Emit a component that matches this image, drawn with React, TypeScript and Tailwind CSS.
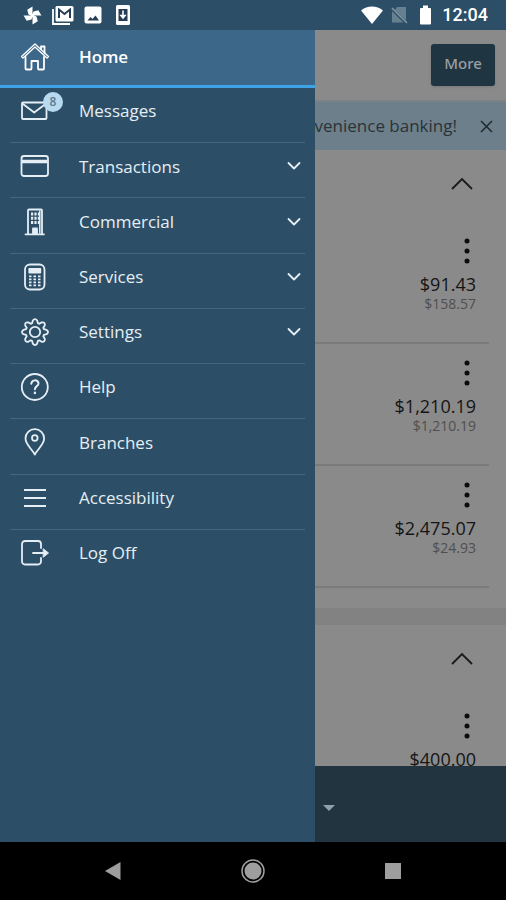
import type { ReactNode } from 'react';

const stroke = {
  fill: 'none',
  stroke: 'currentColor',
  strokeWidth: 1.8,
  strokeLinecap: 'round' as const,
  strokeLinejoin: 'round' as const,
};

function Icon({ children }: { children: ReactNode }) {
  return (
    <svg width="30" height="30" viewBox="0 0 30 30" aria-hidden="true" {...stroke}>
      {children}
    </svg>
  );
}

function HomeIcon() {
  return (
    <Icon>
      <path d="M5.500 15v11.500q0 1 1 1h4q1 0 1-1v-7.500h6.500v7.500q0 1 1 1h4q1 0 1-1V15" />
      <path d="M1.500 14.500 15 2l13.500 12.500-1.500 1.500L15 5 3 16z" strokeWidth="1.300" />
      <path d="M21 7V4.500h3.500V11" />
    </Icon>
  );
}

function MailIcon() {
  return (
    <Icon>
      <rect x="2" y="6.500" width="24.500" height="16.500" rx="1" />
      <path d="m3 8 11.200 8.500L25.500 8" />
    </Icon>
  );
}

function CardIcon() {
  return (
    <Icon>
      <rect x="1.500" y="5" width="26.500" height="20" rx="2.500" />
      <path d="M2 10.500h25.500" strokeWidth="3.500" strokeLinecap="butt" />
    </Icon>
  );
}

function BuildingIcon() {
  return (
    <Icon>
      <path d="M8 27V3.500q0-1 1-1h12q1 0 1 1V27M5.500 27.300h18.500" />
      <path d="M11 7h2.200M14.400 7h2.200M17.800 7h2.200M11 11.200h2.200M14.400 11.200h2.200M17.800 11.200h2.200M11 15.400h2.200M14.400 15.400h2.200M17.800 15.400h2.200" strokeWidth="3" strokeLinecap="butt" />
      <path d="M19.800 4v22" strokeWidth="1.500" />
      <path d="M13 27v-5.500h4V27z" fill="currentColor" />
    </Icon>
  );
}

function CalculatorIcon() {
  return (
    <Icon>
      <rect x="5" y="2.500" width="19.500" height="25" rx="5" />
      <path d="M9.300 7h11v3.500h-11z" fill="currentColor" />
      <path d="M9 14.300h2.500M13.500 14.300H16M18 14.300h2.500M9 17.300h2.500M13.500 17.300H16M18 17.300h2.500M9 20.300h2.500M13.500 20.300H16M18 20.300h2.500M9 23.300h2.500M13.500 23.300H16M18 23.300h2.500" strokeWidth="1.800" strokeLinecap="butt" />
    </Icon>
  );
}

function GearIcon() {
  return (
    <Icon>
      <path d="M12.800 3.500Q15 .6 17.200 3.500L17.900 6.200L19.300 6.800L21.700 5.400Q25.300 4.900 24.800 8.400L23.300 10.800L23.900 12.200L26.600 12.900Q29.500 15 26.600 17.200L23.900 17.900L23.300 19.300L24.800 21.700Q25.300 25.200 21.700 24.800L19.300 23.300L17.900 23.900L17.200 26.600Q15 29.500 12.800 26.600L12.100 23.900L10.700 23.300L8.300 24.800Q4.700 25.200 5.200 21.700L6.700 19.300L6.100 17.900L3.400 17.200Q.5 15 3.400 12.900L6.100 12.200L6.700 10.800L5.200 8.400Q4.700 4.900 8.300 5.400L10.700 6.800L12.100 6.200Z" />
      <circle cx="15" cy="15" r="5.200" />
    </Icon>
  );
}

function HelpIcon() {
  return (
    <Icon>
      <circle cx="14.800" cy="15" r="13" />
      <path d="M11.300 11.800c.2-4.600 7.200-4.400 7.200-.4 0 2.700-3.600 2.800-3.600 5.800" strokeWidth="2" />
      <path d="M14.900 20.800v.3" strokeWidth="2.400" />
    </Icon>
  );
}

function PinIcon() {
  return (
    <Icon>
      <path d="M14.800 27.500C12 22 5.500 17.500 5.500 11.500a9.300 9.300 0 0 1 18.600 0c0 6-6.500 10.500-9.300 16z" />
      <circle cx="14.800" cy="11" r="2.800" />
    </Icon>
  );
}

function LinesIcon() {
  return (
    <Icon>
      <path d="M4 7h22M4 15h22M4 23h22" strokeWidth="2.200" strokeLinecap="butt" />
    </Icon>
  );
}

function LogOffIcon() {
  return (
    <Icon>
      <path d="M21 10V6a3 3 0 0 0-3-3H5a3 3 0 0 0-3 3v17.500a3 3 0 0 0 3 3h13a3 3 0 0 0 3-3V20M13 15h11" />
      <path d="m23.500 11 5 4-5 4z" fill="currentColor" strokeWidth="1" />
    </Icon>
  );
}

const menu = [
  { label: 'Messages', icon: <MailIcon />, badge: 8 },
  { label: 'Transactions', icon: <CardIcon />, expands: true },
  { label: 'Commercial', icon: <BuildingIcon />, expands: true },
  { label: 'Services', icon: <CalculatorIcon />, expands: true },
  { label: 'Settings', icon: <GearIcon />, expands: true },
  { label: 'Help', icon: <HelpIcon /> },
  { label: 'Branches', icon: <PinIcon /> },
  { label: 'Accessibility', icon: <LinesIcon /> },
  { label: 'Log Off', icon: <LogOffIcon /> },
];

function StatusBar() {
  return (
    <header className="flex h-[30px] shrink-0 items-center justify-between bg-[#2c4f67] pl-[23px] pr-[18px] text-white">
      <div className="flex items-center gap-[10px]">
        <svg width="19" height="19" viewBox="0 0 18 18" fill="currentColor" aria-hidden="true">
          <path d="M9 9.500 9 .5 4 3.500 5.200 8zM8.500 9h9l-3-5-4.500 1.200zM9 8.500v9l5-3-1.200-4.500zM9.500 9h-9l3 5 4.500-1.200z" />
        </svg>
        <svg width="22" height="20" viewBox="0 0 22 20" aria-hidden="true">
          <path d="M1 4v15h17" fill="none" stroke="currentColor" strokeWidth="1.800" />
          <rect x="3.500" y="1" width="18" height="15.500" rx="1.500" fill="currentColor" />
          <path d="M7 13V4.500l5.500 4.500L18 4.500V13" fill="none" stroke="#263c55" strokeWidth="2" />
        </svg>
        <svg width="18" height="18" viewBox="0 0 18 18" aria-hidden="true">
          <rect x=".5" y=".5" width="17" height="17" rx="2" fill="currentColor" />
          <path d="m3.500 14.500 3-3.500 2 2 3-3.500 3.500 5z" fill="#263c55" />
        </svg>
        <svg width="22" height="20" viewBox="0 0 22 20" aria-hidden="true">
          <rect x="4" y="0" width="14" height="20" rx="1.500" fill="currentColor" />
          <path d="M6.500 4h9v12h-9z" fill="#263c55" />
          <path d="M11 5.500v6M9 10.500l2 2.500 2-2.500z" fill="#fff" stroke="#fff" strokeWidth="1.600" />
        </svg>
      </div>
      <div className="flex items-center gap-[8px]">
        <svg width="22" height="18" viewBox="0 0 22 18" fill="currentColor" aria-hidden="true">
          <path d="M0 4.500C6-1 16-1 22 4.500L11 18z" />
        </svg>
        <svg width="17" height="18" viewBox="0 0 17 18" aria-hidden="true">
          <path d="M6 1h9v13.500L4 4zM1 5l11.500 11.500H1z" fill="#66808f" />
          <path d="m1 2 15 15" stroke="#8397a4" strokeWidth="1.500" />
        </svg>
        <svg width="18" height="20" viewBox="0 0 18 20" fill="currentColor" aria-hidden="true">
          <path d="M7 .5h5V3h2q1 0 1 1v14.500q0 1-1 1H5q-1 0-1-1V4q0-1 1-1h2z" />
        </svg>
        <span className="font-[Roboto,sans-serif] text-lg font-medium leading-6">12:04</span>
      </div>
    </header>
  );
}

function Drawer() {
  return (
    <nav className="w-[315px] shrink-0 bg-[#2c4f67] text-[#e6eef5]">
      <button className="flex h-[58px] w-full items-center gap-5 border-b-[3px] border-[#3fa2e4] bg-[#3d6788] px-[10px] pb-[2px] text-[17px] font-semibold text-white">
        <span className="flex w-[49px] justify-center">
          <HomeIcon />
        </span>
        Home
      </button>
      <ul className="flex h-[496px] flex-col px-[10px]">
        {menu.map((item) => (
          <li key={item.label} className="flex-1 border-b border-[#46677e] last:border-b-0">
            <button className="flex h-full w-full items-center gap-5 pb-2 pr-1 text-left text-[17px] font-medium">
              <span className="relative flex w-[49px] justify-center">
                {item.icon}
                {item.badge && (
                  <span className="absolute -right-1 -top-1 flex size-5 items-center justify-center rounded-full bg-[#b7daf0] text-xs font-semibold text-[#5d7b90]">
                    {item.badge}
                  </span>
                )}
              </span>
              <span className="flex-1">{item.label}</span>
              {item.expands && (
                <svg width="14" height="10" viewBox="0 0 14 10" aria-hidden="true" {...stroke}>
                  <path d="M1.500 2 7 7.500 12.500 2" />
                </svg>
              )}
            </button>
          </li>
        ))}
      </ul>
    </nav>
  );
}

function Account({ balance, available }: { balance: string; available?: string }) {
  return (
    <li className="mr-[17px] flex h-[122px] shrink-0 flex-col items-end border-b-2 border-[#7b7b7b] pr-[13px] pt-4">
      <button aria-label="Account options" className="mb-2 h-[26px] w-[18px]">
        <svg width="18" height="26" viewBox="0 0 18 26" fill="#0c0c0c" aria-hidden="true">
          <circle cx="9" cy="3" r="2.500" />
          <circle cx="9" cy="13" r="2.500" />
          <circle cx="9" cy="23" r="2.500" />
        </svg>
      </button>
      <span className="text-lg font-medium leading-6 text-[#151515]">{balance}</span>
      {available && <span className="text-sm leading-4 text-[#4f4f4f]">{available}</span>}
    </li>
  );
}

function Group({ children }: { children: ReactNode }) {
  return (
    <section className="shrink-0 bg-[#8a8a8a]">
      <div className="flex h-[72px] justify-end pr-[33px] pt-6">
        <button aria-label="Collapse accounts" className="size-[22px]">
          <svg width="22" height="20" viewBox="0 0 22 20" fill="none" stroke="#1b1b1b" strokeWidth="1.800" aria-hidden="true">
            <path d="m1 14 10-10 10 10" />
          </svg>
        </button>
      </div>
      <ul>{children}</ul>
    </section>
  );
}

export default function App() {
  return (
    <div className="flex h-screen flex-col overflow-hidden bg-black font-['Open_Sans',sans-serif]">
      <StatusBar />
      <div className="flex min-h-0 flex-1">
        <Drawer />

        {/* Page behind the open drawer */}
        <main className="flex min-w-0 flex-1 flex-col bg-[#8a8a8a]">
          <div className="flex h-[70px] shrink-0 items-center justify-end pr-[11px]">
            <button className="h-[42px] w-[64px] rounded-[3px] bg-[#203542] pb-1 font-['Noto_Sans',sans-serif] text-[15px] font-medium text-[#9a9fa3] shadow">
              More
            </button>
          </div>
          <div className="flex h-[50px] shrink-0 items-center justify-end gap-[22px] overflow-hidden border-t-2 border-[#7a8288] bg-[#6c7f8a] pr-[12px]">
            <span className="whitespace-nowrap text-[17px] text-[#2b3338]">venience banking!</span>
            <button aria-label="Dismiss" className="size-[15px]">
              <svg width="15" height="15" viewBox="0 0 15 15" stroke="#20282d" strokeWidth="1.500" aria-hidden="true">
                <path d="m2 2 11 11M13 2 2 13" />
              </svg>
            </button>
          </div>

          <div className="flex min-h-0 flex-1 flex-col overflow-hidden">
            <Group>
              <Account balance="$91.43" available="$158.57" />
              <Account balance="$1,210.19" available="$1,210.19" />
              <Account balance="$2,475.07" available="$24.93" />
            </Group>
            <div className="mt-5 h-[17px] shrink-0 bg-[#828282]" />
            <Group>
              <Account balance="$400.00" />
            </Group>
          </div>

          <div className="flex h-[76px] shrink-0 items-center bg-[#21343f] pl-2">
            <button aria-label="Show more" className="pt-2">
              <svg width="12" height="6" viewBox="0 0 12 6" fill="#8fa0ad" aria-hidden="true">
                <path d="M0 0h12L6 6z" />
              </svg>
            </button>
          </div>
        </main>
      </div>

      {/* Android navigation */}
      <footer className="grid h-[58px] shrink-0 grid-cols-3 items-center justify-items-center bg-black px-[43px] text-[#9e9e9e]">
        <button aria-label="Back">
          <svg width="16" height="18" viewBox="0 0 16 18" fill="currentColor" aria-hidden="true">
            <path d="M0 9 15.500 0v18z" />
          </svg>
        </button>
        <button aria-label="Home screen">
          <svg width="24" height="24" viewBox="0 0 24 24" fill="currentColor" aria-hidden="true">
            <circle cx="12" cy="12" r="8.500" />
            <circle cx="12" cy="12" r="11" fill="none" stroke="currentColor" strokeWidth="1.500" />
          </svg>
        </button>
        <button aria-label="Recent apps">
          <svg width="16" height="16" viewBox="0 0 16 16" fill="currentColor" aria-hidden="true">
            <path d="M0 0h16v16H0z" />
          </svg>
        </button>
      </footer>
    </div>
  );
}
